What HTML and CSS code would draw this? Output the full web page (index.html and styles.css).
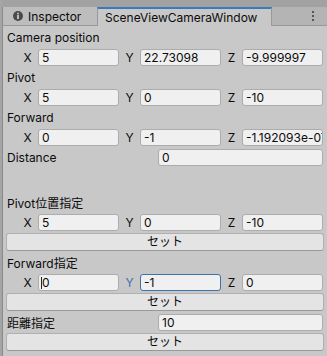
FILE: index.html
```html
<!DOCTYPE html>
<html>
<head>
<meta charset="utf-8">
<link rel="stylesheet" href="styles.css">
</head>
<body>
<div class="window">
  <div class="tabbar">
    <div class="tab inactive">
      <svg class="info" width="10" height="10" viewBox="0 0 10 10"><circle cx="5" cy="5" r="5" fill="#4a4a4a"/><rect x="4.2" y="4" width="1.6" height="4" fill="#d8d8d8"/><rect x="4.2" y="1.8" width="1.6" height="1.5" fill="#d8d8d8"/></svg>
      <span>Inspector</span>
    </div>
    <div class="tab active">SceneViewCameraWindow</div>
    <div class="spacer"></div>
    <svg class="menu" width="4" height="12" viewBox="0 0 4 12"><rect x="1" y="1" width="2" height="2" fill="#555"/><rect x="1" y="5" width="2" height="2" fill="#555"/><rect x="1" y="9" width="2" height="2" fill="#555"/></svg>
  </div>
  <div class="content">
    <div class="row label">Camera position</div>
    <div class="row vec">
      <div class="grp"><span class="axis">X</span><div class="field">5</div></div>
      <div class="grp"><span class="axis">Y</span><div class="field">22.73098</div></div>
      <div class="grp"><span class="axis">Z</span><div class="field">-9.999997</div></div>
    </div>
    <div class="row label">Pivot</div>
    <div class="row vec">
      <div class="grp"><span class="axis">X</span><div class="field">5</div></div>
      <div class="grp"><span class="axis">Y</span><div class="field">0</div></div>
      <div class="grp"><span class="axis">Z</span><div class="field">-10</div></div>
    </div>
    <div class="row label">Forward</div>
    <div class="row vec">
      <div class="grp"><span class="axis">X</span><div class="field">0</div></div>
      <div class="grp"><span class="axis">Y</span><div class="field">-1</div></div>
      <div class="grp"><span class="axis">Z</span><div class="field">-1.192093e-07</div></div>
    </div>
    <div class="row prop">
      <span class="plabel">Distance</span><div class="field">0</div>
    </div>

    <div class="space"></div>

    <div class="row label">Pivot位置指定</div>
    <div class="row vec">
      <div class="grp"><span class="axis">X</span><div class="field">5</div></div>
      <div class="grp"><span class="axis">Y</span><div class="field">0</div></div>
      <div class="grp"><span class="axis">Z</span><div class="field">-10</div></div>
    </div>
    <div class="row"><div class="button">セット</div></div>
    <div class="row label">Forward指定</div>
    <div class="row vec">
      <div class="grp"><span class="axis">X</span><div class="field"><span class="caret"></span>0</div></div>
      <div class="grp"><span class="axis focus">Y</span><div class="field focused">-1</div></div>
      <div class="grp"><span class="axis">Z</span><div class="field">0</div></div>
    </div>
    <div class="row"><div class="button">セット</div></div>
    <div class="row prop">
      <span class="plabel">距離指定</span><div class="field">10</div>
    </div>
    <div class="row"><div class="button">セット</div></div>
  </div>
</div>
</body>
</html>
```

FILE: styles.css
```css
* { box-sizing: border-box; }
html, body { margin: 0; padding: 0; }
body {
  width: 327px;
  height: 356px;
  overflow: hidden;
  background: #a5a5a5;
  font-family: Inter, "Noto Sans CJK JP", sans-serif;
  font-size: 12px;
  color: #0b0b0b;
}
.window {
  display: flex;
  flex-direction: column;
  height: 356px;
  padding-left: 2px;
}
.tabbar {
  height: 26px;
  display: flex;
  align-items: flex-end;
  background: #a2a2a2;
  position: relative;
}
.tab {
  height: 19px;
  display: flex;
  align-items: center;
  white-space: nowrap;
}
.tab.inactive {
  width: 95px;
  padding-left: 10px;
  gap: 5px;
  background: #bdbdbd;
  border-left: 1px solid #8c8c8c;
  border-bottom: 1px solid #999;
}
.tab.active {
  width: 175px;
  padding-left: 7px;
  background: #c8c8c8;
  border-top: 2px solid #3a79bb;
  border-left: 1px solid #999;
  border-right: 1px solid #999;
}
.spacer {
  flex: 1;
  height: 19px;
  background: #b4b4b4;
  border-bottom: 1px solid #999;
}
.menu {
  position: absolute;
  right: 12px;
  top: 10px;
}
.content {
  flex: 1;
  background: #c8c8c8;
  border-left: 1px solid #8a8a8a;
  padding-top: 1px;
  display: flex;
  flex-direction: column;
}
.row {
  height: 20px;
  display: flex;
  align-items: center;
}
.label { padding-left: 4px; }
.vec {
  display: grid;
  grid-template-columns: repeat(3, minmax(0, 1fr));
  padding-left: 14px;
  padding-right: 4px;
}
.grp {
  display: flex;
  align-items: center;
  min-width: 0;
}
.axis {
  width: 21px;
  flex: none;
  text-align: center;
}
.axis.focus { color: #3a72b0; }
.field {
  flex: 1;
  min-width: 0;
  height: 17px;
  background: #f0f0f0;
  border: 1px solid #acacac;
  border-radius: 3px;
  padding-left: 3px;
  line-height: 15px;
  white-space: nowrap;
  overflow: hidden;
}
.field.focused {
  border-color: #3b71ad;
}
.caret {
  display: inline-block;
  width: 1px;
  height: 12px;
  background: #222;
  vertical-align: -2px;
  margin-left: -1px;
}
.prop {
  padding-left: 4px;
  padding-right: 4px;
}
.plabel { width: 151px; flex: none; }
.space { height: 25px; }
.button {
  flex: 1;
  margin: 0 3px;
  height: 18px;
  background: #e4e4e4;
  border: 1px solid #b0b0b0;
  border-bottom-color: #999;
  border-radius: 3px;
  text-align: center;
  line-height: 16px;
}
```
